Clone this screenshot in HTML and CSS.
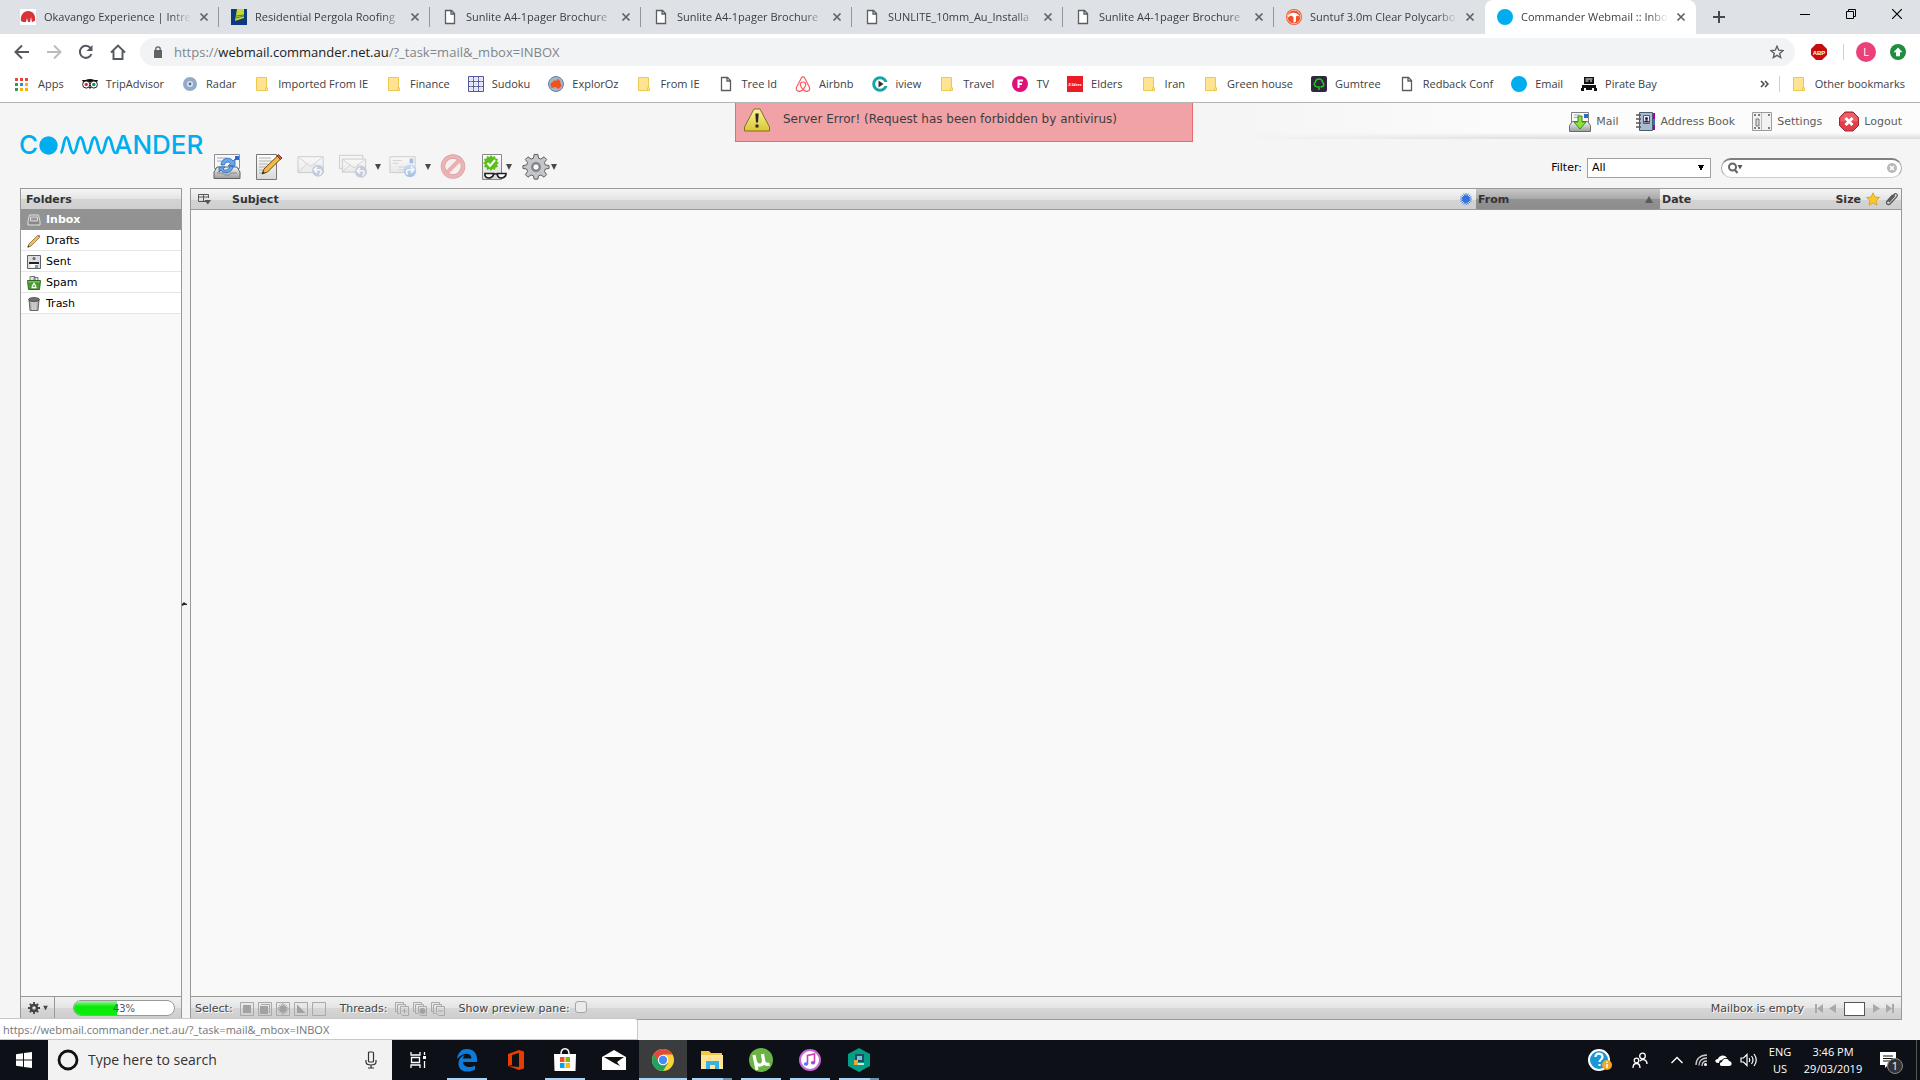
FILE: index.html
```html
<!DOCTYPE html>
<html lang="en">
<head>
<meta charset="utf-8">
<title>Commander Webmail :: Inbox</title>
<link rel="stylesheet" href="styles.css">
</head>
<body>
<svg class="defs" aria-hidden="true">
  <defs>
    <linearGradient id="paper" x1="0" y1="0" x2="0" y2="1"><stop offset="0" stop-color="#fff"/><stop offset="1" stop-color="#d6d8da"/></linearGradient>
    <linearGradient id="steel" x1="0" y1="0" x2="0" y2="1"><stop offset="0" stop-color="#f4f4f4"/><stop offset="1" stop-color="#9a9c9e"/></linearGradient>
    <linearGradient id="blueball" x1="0" y1="0" x2="0" y2="1"><stop offset="0" stop-color="#8db9ee"/><stop offset="1" stop-color="#2f6fd0"/></linearGradient>
    <linearGradient id="yellow" x1="0" y1="0" x2="0" y2="1"><stop offset="0" stop-color="#f8f5a0"/><stop offset="1" stop-color="#dcc532"/></linearGradient>
    <symbol id="file" viewBox="0 0 16 16"><path d="M3.5 1.5h6l3 3v10h-9zM9 1.500v3.500h3.500" fill="#fff" stroke="#5a5d61" stroke-width="1.300"/></symbol>
    <symbol id="folder" viewBox="0 0 16 16"><path d="M2.500 1.500h10v9.500l1 1v2.500h-11z" fill="#fee390" stroke="#edc84f"/><path d="M11.500 14v-2l1-1.500" fill="none" stroke="#edc84f"/></symbol>
    <symbol id="x" viewBox="0 0 10 10"><path d="M1.500 1.500l7 7m0-7l-7 7" fill="none" stroke="#5f6368" stroke-width="1.700"/></symbol>
    <symbol id="down" viewBox="0 0 6 6"><path d="M0 0h6L3 6z" fill="#4a4a4a"/></symbol>
    <symbol id="envelope" viewBox="0 0 30 28"><path d="M1 3h27v17H1z" fill="url(#paper)" stroke="#8b8b8b"/><path d="M1.500 3.500l13 10 13-10M1.500 19.500l9-8.500M27.500 19.500l-9-8.500" fill="none" stroke="#9a9a9a"/></symbol>
  </defs>
</svg>

<header class="browser">
  <nav class="tabs" aria-label="Tabs">
    <div class="tab"><svg class="i16" viewBox="0 0 16 16"><path fill="#fff" d="M0 0h16v16H0z"/><path fill="#d9343c" d="M1 12C0 6 4 2 8 2c5 0 8 4 7 10l-3 1-1-5-1 5H8L7 9l-1 4H3z"/></svg><span class="tab-title">Okavango Experience | Intre</span><button class="close" aria-label="Close tab"><svg viewBox="0 0 10 10"><use href="#x"/></svg></button></div>
    <div class="tab"><svg class="i16" viewBox="0 0 16 16"><path fill="#0c3a7c" d="M0 0h16v16H0z"/><path fill="#c3d82d" d="M6 0h7v9l-9 3z"/><path stroke="#0c3a7c" stroke-width=".6" d="M5 9l8-2M5 7l8-1"/></svg><span class="tab-title">Residential Pergola Roofing</span><button class="close" aria-label="Close tab"><svg viewBox="0 0 10 10"><use href="#x"/></svg></button></div>
    <div class="tab"><svg class="i16"><use href="#file"/></svg><span class="tab-title">Sunlite A4-1pager Brochure</span><button class="close" aria-label="Close tab"><svg viewBox="0 0 10 10"><use href="#x"/></svg></button></div>
    <div class="tab"><svg class="i16"><use href="#file"/></svg><span class="tab-title">Sunlite A4-1pager Brochure</span><button class="close" aria-label="Close tab"><svg viewBox="0 0 10 10"><use href="#x"/></svg></button></div>
    <div class="tab"><svg class="i16"><use href="#file"/></svg><span class="tab-title">SUNLITE_10mm_Au_Installa</span><button class="close" aria-label="Close tab"><svg viewBox="0 0 10 10"><use href="#x"/></svg></button></div>
    <div class="tab"><svg class="i16"><use href="#file"/></svg><span class="tab-title">Sunlite A4-1pager Brochure</span><button class="close" aria-label="Close tab"><svg viewBox="0 0 10 10"><use href="#x"/></svg></button></div>
    <div class="tab last"><svg class="i16" viewBox="0 0 16 16"><circle cx="8" cy="8" r="8" fill="#f0512b"/><path d="M2 6.500c2-4 10-4 12 1.500-2-1.500-3-1.500-4-.5v5l-2.500 1.500V8C5 6 4 6.500 2 8.500z" fill="#fff"/><circle cx="8" cy="8" r="6.800" fill="none" stroke="#fff" stroke-width=".6"/></svg><span class="tab-title">Suntuf 3.0m Clear Polycarbo</span><button class="close" aria-label="Close tab"><svg viewBox="0 0 10 10"><use href="#x"/></svg></button></div>
    <div class="tab active"><svg class="i16" viewBox="0 0 16 16"><circle cx="8" cy="8" r="8" fill="#00aeef"/></svg><span class="tab-title">Commander Webmail :: Inbo</span><button class="close" aria-label="Close tab"><svg viewBox="0 0 10 10"><use href="#x"/></svg></button></div>
    <button class="new-tab" aria-label="New tab"><svg width="12" height="12"><path d="M6 0v12M0 6h12" stroke="#45494d" stroke-width="2"/></svg></button>
    <div class="window-controls">
      <button aria-label="Minimize"><svg width="10" height="10"><path d="M0 5.500h10" stroke="#000"/></svg></button>
      <button aria-label="Restore"><svg width="10" height="10"><path d="M.5 2.500h7v7h-7zM2.500 2.500v-2h7v7h-2" fill="none" stroke="#000"/></svg></button>
      <button aria-label="Close"><svg width="10" height="10"><path d="M0 0l10 10M10 0L0 10" stroke="#000" stroke-width="1.200"/></svg></button>
    </div>
  </nav>

  <div class="address-row">
    <div class="nav-buttons">
      <button aria-label="Back"><svg class="i16" viewBox="0 0 16 16"><path d="M15 8H2M8 1.500L1.500 8 8 14.500" fill="none" stroke="#55595e" stroke-width="2"/></svg></button>
      <button aria-label="Forward"><svg class="i16" viewBox="0 0 16 16"><path d="M1 8h13M8 1.500L14.500 8 8 14.500" fill="none" stroke="#babcbe" stroke-width="2"/></svg></button>
      <button aria-label="Reload"><svg class="i16" viewBox="0 0 16 16"><path d="M13.500 10A6 6 0 1 1 12.500 4" fill="none" stroke="#55595e" stroke-width="2"/><path d="M14.500 1v6h-6z" fill="#55595e"/></svg></button>
      <button aria-label="Home"><svg class="i16" viewBox="0 0 16 16"><path d="M1 8.500L8 1.500l7 7M3.500 7v8h9V7" fill="none" stroke="#55595e" stroke-width="1.900"/></svg></button>
    </div>
    <div class="omnibox">
      <svg width="10" height="12" viewBox="0 0 10 12"><path d="M1 4h8v8H1z" fill="#5f6368"/><path d="M2.800 4.500V3a2.200 2.200 0 0 1 4.400 0v1.500" fill="none" stroke="#5f6368" stroke-width="1.300"/></svg>
      <span class="url">https://<b>webmail.commander.net.au</b>/?_task=mail&amp;_mbox=INBOX</span>
      <button aria-label="Bookmark this page"><svg width="14" height="14" viewBox="0 0 14 14"><path d="M7 1.200l1.700 4 4.300.4-3.300 2.800 1 4.200L7 10.400l-3.700 2.200 1-4.200L1 5.600l4.300-.4z" fill="none" stroke="#5f6368" stroke-width="1.400"/></svg></button>
    </div>
    <button class="ext" aria-label="Adblock Plus"><svg class="i16" viewBox="0 0 16 16"><path d="M5 0h6l5 5v6l-5 5H5l-5-5V5z" fill="#c70d0d"/><text x="8" y="11" class="abp">ABP</text></svg></button>
    <span class="bar-sep"></span>
    <button class="avatar">L</button>
    <button class="ext" aria-label="Update"><svg class="i16" viewBox="0 0 16 16"><circle cx="8" cy="8" r="8" fill="#1e8e3e"/><path d="M8 3.500l4.500 4.700H10v4H6v-4H3.500z" fill="#fff"/></svg></button>
  </div>

  <nav class="bookmarks" aria-label="Bookmarks">
    <a href="#"><svg class="i16" viewBox="0 0 16 16"><path fill="#e8453c" d="M1 2h3v3H1zM6 2h3v3H6zM11 2h3v3h-3z"/><path fill="#2d9b57" d="M1 7h3v3H1zM1 12h3v3H1z"/><path fill="#3b82f0" d="M6 7h3v3H6z"/><path fill="#f5b400" d="M11 7h3v3h-3zM6 12h3v3H6zM11 12h3v3h-3z"/></svg>Apps</a>
    <a href="#"><svg class="i16" viewBox="0 0 16 16"><path d="M0 4h3.500c3-1.500 6-1.500 9 0H16l-1 2H1z" fill="#111"/><circle cx="4.200" cy="8.500" r="3.600" fill="#fff" stroke="#222"/><circle cx="11.800" cy="8.500" r="3.600" fill="#fff" stroke="#222"/><circle cx="4.200" cy="8.500" r="1.700" fill="#d33"/><circle cx="11.800" cy="8.500" r="1.700" fill="#285"/><path d="M7 11h2l-1 2.500z"/></svg>TripAdvisor</a>
    <a href="#"><svg class="i16" viewBox="0 0 16 16"><circle cx="8" cy="8" r="7" fill="#92abc8"/><circle cx="8" cy="8" r="3" fill="#dde3ea"/><circle cx="8" cy="8" r="1.400" fill="#54708e"/></svg>Radar</a>
    <a href="#"><svg class="i16"><use href="#folder"/></svg>Imported From IE</a>
    <a href="#"><svg class="i16"><use href="#folder"/></svg>Finance</a>
    <a href="#"><svg class="i16" viewBox="0 0 16 16"><path d="M.5.500h15v15H.5zM5.500 0v16M10.500 0v16M0 5.500h16M0 10.500h16" fill="#f4f4ff" stroke="#55559a"/><path d="M3 1v14M8 1v14M13 1v14M1 3h14M1 8h14M1 13h14" stroke="#d0d0e8" stroke-width=".6"/></svg>Sudoku</a>
    <a href="#"><svg class="i16" viewBox="0 0 16 16"><circle cx="8" cy="8" r="7.500" fill="#9eb6cc" stroke="#68819b"/><path d="M2.500 9c0-3 3-3 4-5l2 1 1-2 2 1 1 3 1 3-3 3-3-2-4 1z" fill="#f4511e"/></svg>ExplorOz</a>
    <a href="#"><svg class="i16"><use href="#folder"/></svg>From IE</a>
    <a href="#"><svg class="i16"><use href="#file"/></svg>Tree Id</a>
    <a href="#"><svg class="i16" viewBox="0 0 16 16"><path d="M8 13.500C6 11 5.300 9.800 5.300 8.700a2.700 2.700 0 0 1 5.400 0c0 1.100-.7 2.300-2.700 4.800-2 2-4 2.300-5.500 1.300-1.500-1-1.300-2.600-.8-3.800L6.300 2c.8-1.400 2.600-1.400 3.400 0l4.600 9c.5 1.200.7 2.800-.8 3.800-1.500 1-3.500.7-5.500-1.300z" fill="none" stroke="#ff5a5f" stroke-width="1.200"/></svg>Airbnb</a>
    <a href="#"><svg class="i16" viewBox="0 0 16 16"><circle cx="8" cy="8" r="6.300" fill="none" stroke="#16a5a5" stroke-width="3"/><path d="M11 6h5v4h-5z" fill="#fff"/><path d="M6.500 4.500l5 3.500-5 3.500z" fill="#333"/></svg>iview</a>
    <a href="#"><svg class="i16"><use href="#folder"/></svg>Travel</a>
    <a href="#"><svg class="i16" viewBox="0 0 16 16"><circle cx="8" cy="8" r="8" fill="#e20f7b"/><path d="M6.500 12V4.500H11M6.500 8H10" stroke="#fff" stroke-width="2" fill="none"/></svg>TV</a>
    <a href="#"><svg class="i16" viewBox="0 0 16 16"><path d="M0 0h16v16H0z" fill="#ed1c24"/><text x="8" y="10" class="elders">Elders</text></svg>Elders</a>
    <a href="#"><svg class="i16"><use href="#folder"/></svg>Iran</a>
    <a href="#"><svg class="i16"><use href="#folder"/></svg>Green house</a>
    <a href="#"><svg class="i16" viewBox="0 0 16 16"><rect width="16" height="16" rx="2" fill="#32253c"/><path d="M8 14v-3c-6 0-5-4-3.500-5C5 2 11 2 11.500 6c1.500 1 2.500 5-2 5" fill="none" stroke="#14d314" stroke-width="1.500"/></svg>Gumtree</a>
    <a href="#"><svg class="i16"><use href="#file"/></svg>Redback Conf</a>
    <a href="#"><svg class="i16" viewBox="0 0 16 16"><circle cx="8" cy="8" r="8" fill="#00aeef"/></svg>Email</a>
    <a href="#"><svg class="i16" viewBox="0 0 16 16"><path d="M3 1h10v7H3zM1 9h14v3H1zM0 12h3v3H0zM13 12h3v3h-3zM5 12h6v2H5z" fill="#111"/><path d="M4.500 3h7M4.500 5h3M9 5h2" stroke="#fff"/></svg>Pirate Bay</a>
    <button class="more" aria-label="More bookmarks"><svg width="9" height="8" viewBox="0 0 9 8"><path d="M1 1l3 3-3 3M5 1l3 3-3 3" fill="none" stroke="#45494d" stroke-width="1.500"/></svg></button>
    <span class="bar-sep"></span>
    <a href="#"><svg class="i16"><use href="#folder"/></svg>Other bookmarks</a>
  </nav>
</header>

<main class="webmail">
  <div class="error" role="alert">
    <svg width="28" height="26" viewBox="0 0 28 26"><path d="M11 2h6l9.500 18v4h-25v-4z" fill="url(#yellow)" stroke="#7d7220" stroke-linejoin="round"/><path d="M12.300 6.500h3.400l-.7 9h-2zM12.500 17.500h3v3h-3z" fill="#2a2a1a"/></svg>
    <span>Server Error! (Request has been forbidden by antivirus)</span>
  </div>

  <div class="mail-head">
    <svg class="logo" width="189" height="20" viewBox="0 0 189 20" role="img" aria-label="Commander">
      <text x="-1" y="18">C</text><circle cx="28.500" cy="9.500" r="9.200" fill="#00aeef"/>
      <path d="M40.500 17c3-1 3-15.500 6-15.500S50 17 53.500 17s3.500-15.500 7-15.500S64 17 67.500 17s3.500-15.500 7-15.500S78 17 81.500 17s3.500-15.500 7-15.500S92 17 95.500 17" fill="none" stroke="#00aeef" stroke-width="2.800"/>
      <text x="94" y="18">ANDER</text>
    </svg>
    <nav class="tasks">
      <a href="#"><svg width="22" height="22" viewBox="0 0 22 22"><path d="M2.500 1.500h17v10h-17z" fill="#f7f9fc" stroke="#7e7e7e"/><path d="M5 4h6M5 6.500h5" stroke="#a0a8b4"/><path d="M15 3h4v4h-4z" fill="#2e68d4"/><path d="M.5 20.500v-6l3-4h15l3 4v6z" fill="url(#steel)" stroke="#6b6b6b"/><path d="M9 5h4v6h4l-6 7-6-7h4z" fill="#8ce23c" stroke="#3c8a12"/></svg>Mail</a>
      <a href="#"><svg width="20" height="22" viewBox="0 0 20 22"><path d="M15 2h4v17h-4z" fill="#a0a"/><path d="M15 8h4v6h-4z" fill="#37a"/><path d="M3.500 1.500h13v18h-13z" fill="#a9bbd0" stroke="#4b5c6e"/><path d="M7.500 4.500h6v8h-6z" fill="#eef" stroke="#556"/><circle cx="10.500" cy="7.500" r="1.500" fill="#223"/><path d="M8 11.500c0-3 5-3 5 0z" fill="#223"/><path d="M0 4h5M0 8h5M0 12h5M0 16h5" stroke="#555" stroke-width="1.500"/></svg>Address Book</a>
      <a href="#"><svg width="20" height="22" viewBox="0 0 20 22"><path d="M.5 1.500h19v18H.5z" fill="#f2f2f2" stroke="#9b9b9b"/><path d="M9.500 2v17" stroke="#bbb"/><path d="M4 8h3v7H4z" fill="#ddd" stroke="#777"/><path d="M2 4h2M6 4h2M16 4h2M2 17h2M6 17h2M16 17h2" stroke="#555" stroke-width="1.500"/></svg>Settings</a>
      <a href="#"><svg width="20" height="22" viewBox="0 0 20 22"><path d="M6 1h8l5.500 5.500v8L14 20H6L.5 14.500v-8z" fill="#de3f4b" stroke="#a32630"/><path d="M6 2h8l4.500 4.500v4h-17v-4z" fill="#f4808a" opacity=".5"/><path d="M6.500 7l7 7m0-7l-7 7" stroke="#fff" stroke-width="3"/></svg>Logout</a>
    </nav>
    <div class="toolbar">
      <button aria-label="Check for new messages"><svg width="28" height="28" viewBox="0 0 28 28"><path d="M1.500 1.500h25v14h-25z" fill="#f5f8fc" stroke="#909090"/><path d="M4 5h10M4 8h6" stroke="#aab"/><path d="M22 3h4v4h-4z" fill="#2e68d4"/><path d="M1 25.500V19l3-5h20l3 5v6.500z" fill="url(#steel)" stroke="#606060"/><path d="M4 20h6l1.500 2h5L18 20h6" fill="none" stroke="#888"/><path d="M8 12c0-7 9-9 12-4l2-2v7h-7l2.500-2.500c-2-2.500-6-1-6 1.500zM20 13c0 7-9 9-12 4l-2 2v-5h6l-2 2c2 2.500 6 1 7-3z" fill="#6aa5ea" stroke="#2f66b8" stroke-width=".8"/></svg></button>
      <button aria-label="Compose"><svg width="28" height="28" viewBox="0 0 28 28"><path d="M1.500 1.500h20v25h-20z" fill="url(#paper)" stroke="#777"/><path d="M4 5h12M4 8h13M4 11h9M4 14h8M4 17h7M4 20h4" stroke="#b0b0b0"/><path d="M7 21l2-5L22.500 3l3 3-13 13z" fill="#f3bb45" stroke="#6b4a14"/><path d="M22 3l1.500-1.500 3.500 3.500L25.500 6.500z" fill="#cf5a5a" stroke="#7a3030"/><path d="M7 21l1-3 2 2z" fill="#333"/></svg></button>
      <button disabled aria-label="Reply"><svg width="28" height="28" viewBox="0 0 30 28"><use href="#envelope" width="30" height="28"/><circle cx="22.500" cy="18" r="6.500" fill="#7e93b8"/><path d="M19 17h5c3 0 2 4 0 5M21.500 14L18.500 17l3 3" fill="none" stroke="#fff" stroke-width="1.700"/></svg></button>
      <button disabled aria-label="Reply to all"><svg width="28" height="28" viewBox="0 0 30 28"><path d="M.5 1.500h25v14H.5z" fill="#f6f6f6" stroke="#8b8b8b"/><path d="M3.500 5.500h25v14h-25z" fill="url(#paper)" stroke="#8b8b8b"/><path d="M4 6l12 9 12-9M4 19l8-7M28 19l-8-7" fill="none" stroke="#9a9a9a"/><circle cx="23.500" cy="19" r="6.500" fill="#7e93b8"/><path d="M20 18h5c3 0 2 4 0 5M22.500 15L19.500 18l3 3" fill="none" stroke="#fff" stroke-width="1.700"/></svg></button>
      <button class="drop" aria-label="Reply options"><svg width="6" height="6"><use href="#down"/></svg></button>
      <button disabled aria-label="Forward"><svg width="28" height="28" viewBox="0 0 30 28"><path d="M1 3h27v17H1z" fill="url(#paper)" stroke="#8b8b8b"/><path d="M4 7h10M4 10h6M10 14h8M10 17h6" stroke="#9a9aa8"/><path d="M22 5h4v5h-4z" fill="#2e68d4"/><circle cx="22.500" cy="18" r="6.800" fill="url(#blueball)"/><path d="M26 17h-4c-4 0-4 3-2 5M23.500 13.500l3 3.500-3 3" fill="none" stroke="#fff" stroke-width="1.700"/></svg></button>
      <button class="drop" aria-label="Forward options"><svg width="6" height="6"><use href="#down"/></svg></button>
      <button disabled aria-label="Delete"><svg width="28" height="28" viewBox="0 0 28 28"><circle cx="14" cy="13.500" r="10" fill="#fbeaea" stroke="#a61c1c" stroke-width="4.500"/><circle cx="14" cy="13.500" r="10" fill="none" stroke="#e05555" stroke-width="3.200"/><path d="M7 20.500l14-14" stroke="#d64a4a" stroke-width="4"/></svg></button>
      <button aria-label="Mark messages"><svg width="28" height="28" viewBox="0 0 28 28"><path d="M1.500 1.500h19v25h-19z" fill="url(#paper)" stroke="#888"/><path d="M10 2l1.500 2 2.500-1 .5 2.500 2.500.5-1 2.500 2 1.500-2 1.500 1 2.500-2.500.5-.5 2.500-2.500-1L10 18l-1.500-2-2.500 1-.5-2.500-2.500-.5 1-2.500-2-1.500 2-1.500-1-2.500 2.500-.5L6 3l2.500 1z" fill="#5abf1a"/><path d="M6.500 10l2.500 3 5-6" fill="none" stroke="#fff" stroke-width="2"/><path d="M4 20.500h8.500c0 5-7 6-8.500 2zM16.500 20.500H25c0 5-7 6-8.500 2z" fill="#fff" stroke="#222" stroke-width="1.700"/><path d="M12.500 21.500q2-1.500 4 0" fill="none" stroke="#222" stroke-width="1.500"/></svg></button>
      <button class="drop near" aria-label="Mark options"><svg width="6" height="6"><use href="#down"/></svg></button>
      <button aria-label="More actions"><svg width="28" height="28" viewBox="-1 0 30 29"><path d="M12 1h4l.7 4 2.600 1 3.300-2.400 2.800 2.800L23 9.700l1 2.600 4 .7v3l-4 .7-1 2.600 2.400 3.300-2.800 2.800-3.300-2.400-2.600 1-.7 3.500h-4l-.7-3.500-2.600-1-3.300 2.400-2.800-2.800L5 19.300l-1-2.600-4-.7v-3l4-.7 1-2.600-2.400-3.300 2.800-2.800L8.700 6l2.600-1z" fill="#c4c6ca" stroke="#555"/><circle cx="14" cy="14.500" r="5.500" fill="#8c8f94"/><circle cx="14" cy="14.500" r="3.500" fill="#f6f6f6" stroke="#666"/></svg></button>
      <button class="drop close-by" aria-label="More options"><svg width="6" height="6"><use href="#down"/></svg></button>
    </div>
    <form class="filters">
      <label for="filter">Filter:</label>
      <select id="filter"><option>All</option></select>
      <div class="search">
        <svg width="16" height="12" viewBox="0 0 16 12"><circle cx="4.500" cy="5" r="3.500" fill="none" stroke="#666" stroke-width="2"/><path d="M7 8l2.500 3" stroke="#666" stroke-width="2"/><path d="M9.500 3h5L12 7.500z" fill="#555"/></svg>
        <input type="text" aria-label="Search">
        <svg width="10" height="10" viewBox="0 0 10 10"><circle cx="5" cy="5" r="5" fill="#b8b8b8"/><path d="M3 3l4 4m0-4L3 7" stroke="#fff" stroke-width="1.500"/></svg>
      </div>
    </form>
  </div>

  <div class="panes">
    <section class="pane folders">
      <h2 class="bar-head">Folders</h2>
      <ul>
        <li><a href="#" class="selected"><svg width="14" height="14" viewBox="0 0 14 14"><path d="M2.500 2h9L13 8.500V12H1V8.500z" fill="#888" stroke="#e4e4e4"/><path d="M3.500 4h7v4h-7z" fill="#999" stroke="#ddd"/></svg>Inbox</a></li>
        <li><a href="#"><svg width="14" height="14" viewBox="0 0 14 14"><path d="M1 13l1-3 8.500-8.500 2 2L4 12z" fill="#f0c060" stroke="#8a6a30" stroke-width=".8"/><path d="M10.500 1.500l2 2 .8-1.500L12 .7z" fill="#c66"/><path d="M.5 13.500l.6-2 1.500 1.500z" fill="#222"/></svg>Drafts</a></li>
        <li><a href="#"><svg width="14" height="14" viewBox="0 0 14 14"><path d="M.5.500h13v13H.5z" fill="#dcdfe2" stroke="#5e6266"/><circle cx="7" cy="3.500" r="1.500" fill="#666"/><path d="M2 7h10v2H2z" fill="#222"/><path d="M3.500 9h7v3.500h-7z" fill="#fff"/><path d="M8 10h3v3H8z" fill="#6a98e0"/></svg>Sent</a></li>
        <li><a href="#"><svg width="14" height="14" viewBox="0 0 14 14"><path d="M3 .5h5v5H3zM7 1.500h4v4H7z" fill="#dfe6f2" stroke="#777"/><path d="M.5 4.500h13l-1 9h-11z" fill="#4c9a35" stroke="#2f6e1f"/><path d="M1 5h12v1.500H1z" fill="#78bb5d"/><path d="M5 10.500L7 7.500l2 3M4.500 11.500h5" fill="none" stroke="#fff" stroke-width="1.300"/></svg>Spam</a></li>
        <li><a href="#"><svg width="14" height="14" viewBox="0 0 14 14"><path d="M2 3h10l-1 10.500H3z" fill="#aaa" stroke="#666"/><ellipse cx="7" cy="2.500" rx="5.500" ry="1.800" fill="#777" stroke="#444"/><path d="M5 5l.3 8M7 5v8M9 5l-.3 8" stroke="#e0e0e0"/></svg>Trash</a></li>
      </ul>
      <footer class="bar-foot">
        <button class="gear" aria-label="Folder actions"><svg width="12" height="12" viewBox="0 0 12 12"><circle cx="6" cy="6" r="3" fill="none" stroke="#444" stroke-width="2.500"/><path d="M6 0v2.500M6 9.500V12M0 6h2.500M9.500 6H12M1.800 1.800l1.700 1.700M8.500 8.500l1.700 1.700M1.800 10.200l1.700-1.700M8.500 3.500l1.700-1.700" stroke="#444" stroke-width="1.800"/></svg><svg width="5" height="6" viewBox="0 0 6 6"><use href="#down"/></svg></button>
        <div class="quota"><span class="quota-fill" style="width:43%"></span><span class="quota-text">43%</span></div>
      </footer>
    </section>

    <div class="splitter"><svg width="5" height="4" viewBox="0 0 5 4"><path d="M0 4V2l2-2 1 1 2 1v1H2z" fill="#222"/></svg></div>

    <section class="pane messages">
      <table>
        <thead>
          <tr>
            <th class="c-opt"><svg width="13" height="11" viewBox="0 0 13 11"><path d="M8 7.500H.5v-7h10V4M.5 3h10M5.500.500v7" fill="none" stroke="#555"/><path d="M6.500 6h6.500l-3.200 4.500z" fill="#555"/></svg></th>
            <th>Subject</th>
            <th class="c-icon"><svg width="12" height="12" viewBox="0 0 12 12"><circle cx="6" cy="6" r="3.800" fill="#2f74e0"/><path d="M6 0v12M0 6h12M1.800 1.800l8.400 8.400M10.200 1.800l-8.400 8.400M3.700.500l4.600 11M8.300.500L3.700 11.500M.5 3.700l11 4.600M.5 8.300l11-4.600" stroke="#2f74e0" stroke-width=".9"/></svg></th>
            <th class="c-from"><span class="sorted">From<svg width="8" height="7" viewBox="0 0 8 7"><path d="M4 0l4 7H0z" fill="#5a5a5a"/></svg></span></th>
            <th class="c-date">Date</th>
            <th class="c-size">Size</th>
            <th class="c-flag"><svg width="14" height="14" viewBox="0 0 14 14"><path d="M7 .8l1.900 4.200 4.600.5-3.400 3.100.9 4.600L7 10.900 3 13.200l.9-4.600L.5 5.500 5.100 5z" fill="#fbc92c" stroke="#d79a1e" stroke-width=".8"/></svg></th>
            <th class="c-flag"><svg width="14" height="14" viewBox="0 0 14 14"><path d="M4 10l6-6.500M2.500 9.500L9 2.500c2-2 4.500.3 2.700 2.300L5.500 11.500c-2.500 2.500-5.500-.2-3.300-2.600L7.500 3" fill="none" stroke="#555" stroke-width="1.200"/></svg></th>
          </tr>
        </thead>
      </table>
      <footer class="bar-foot list-foot">
        <span>Select:</span>
        <span class="set">
          <button aria-label="All"><svg class="i14" viewBox="0 0 14 14"><path class="bx" d="M.5.500h13v13H.5z"/><path class="fl" d="M3 3h8v8H3z"/></svg></button>
          <button aria-label="Current page"><svg class="i14" viewBox="0 0 14 14"><path class="bx" d="M.5.500h13v13H.5zM3 2.500h8.500V11"/><path class="fl" d="M2 4h8v8H2z"/></svg></button>
          <button aria-label="Unread"><svg class="i14" viewBox="0 0 14 14"><path class="bx" d="M.5.500h13v13H.5zM7 1v12M1 7h12M3 3l8 8M11 3l-8 8M5 2l4 10M9 2L5 12M2 5l10 4M2 9l10-4"/><circle class="fl" cx="7" cy="7" r="3.500"/></svg></button>
          <button aria-label="Invert"><svg class="i14" viewBox="0 0 14 14"><path class="bx" d="M.5.500h13v13H.5z"/><path class="fl" d="M3 2.500v8.500h8.500z"/></svg></button>
          <button aria-label="None"><svg class="i14" viewBox="0 0 14 14"><path class="bx" d="M.5.500h13v13H.5z"/></svg></button>
        </span>
        <span>Threads:</span>
        <span class="set">
          <button aria-label="Expand all"><svg class="i14" viewBox="0 0 14 14"><path class="bx" d="M2.500 9.500h-2v-9h8v2M4.500 11.500h-2v-9h8v2M5.500 4.500h8v9h-6l-2-2zM9.500 6.500v5M7 9h5"/></svg></button>
          <button aria-label="Expand unread"><svg class="i14" viewBox="0 0 14 14"><path class="bx" d="M2.500 9.500h-2v-9h8v2M4.500 11.500h-2v-9h8v2M5.500 4.500h8v9h-6l-2-2z"/><circle class="fl" cx="9.500" cy="9" r="3"/></svg></button>
          <button aria-label="Collapse all"><svg class="i14" viewBox="0 0 14 14"><path class="bx" d="M2.500 9.500h-2v-9h8v2M4.500 11.500h-2v-9h8v2M5.500 4.500h8v9h-6l-2-2zM7 9h5"/></svg></button>
        </span>
        <label for="pane">Show preview pane:</label><input type="checkbox" id="pane">
        <span class="count">Mailbox is empty</span>
        <button aria-label="First page"><svg width="8" height="9"><path class="pg" d="M0 0h2v9H0zM8 0v9L2 4.500z"/></svg></button>
        <button aria-label="Previous page"><svg width="7" height="9"><path class="pg" d="M7 0v9L0 4.500z"/></svg></button>
        <input class="page" type="text" aria-label="Page">
        <button aria-label="Next page"><svg width="7" height="9"><path class="pg" d="M0 0v9l7-4.500z"/></svg></button>
        <button aria-label="Last page"><svg width="8" height="9"><path class="pg" d="M6 0h2v9H6zM0 0v9l6-4.500z"/></svg></button>
      </footer>
    </section>
  </div>
  <div class="status-bubble">https://webmail.commander.net.au/?_task=mail&amp;_mbox=INBOX</div>
</main>

<footer class="taskbar">
  <button class="start" aria-label="Start"><svg width="16" height="16" viewBox="0 0 16 16"><path d="M0 2.200L7 1.200v6.300H0zM8 1l8-1v7.500H8zM0 8.500h7v6.300l-7-1zM8 8.500h8V16l-8-1z" fill="#fff"/></svg></button>
  <label class="win-search"><svg width="22" height="22" viewBox="0 0 22 22"><circle cx="11" cy="11" r="9" fill="none" stroke="#111" stroke-width="2.800"/></svg><input type="text" placeholder="Type here to search"><svg width="12" height="18" viewBox="0 0 12 18"><rect x="3.500" y="1" width="5" height="10" rx="1" fill="none" stroke="#333" stroke-width="1.200"/><path d="M1 9v2c0 4 10 4 10 0V9M6 14v3M3 17h6" fill="none" stroke="#333" stroke-width="1.200"/></svg></label>
  <div class="apps">
    <button aria-label="Task view"><svg width="18" height="18" viewBox="0 0 18 18"><path d="M2 1v3h9V1M2 17v-3h9v3M2.500 6.500h8v5h-8zM15.500 1v3M15.500 10v7" fill="none" stroke="#fff" stroke-width="1.300"/><path d="M14 5h3v3h-3z" fill="#fff"/></svg></button>
    <button class="open" aria-label="Edge"><svg width="22" height="24" viewBox="0 0 22 24"><path d="M1 11C2 4 6 1 11 1c6 0 10 4 10 10v3H7c0 5 7 6.500 12 3.500v4C11 26 2 23 2.500 15 3 10 6 8 9 7 8 8 7.200 9 7 10.500h8.500C15.500 4 7 4 1 11z" fill="#0c7cdc"/></svg></button>
    <button aria-label="Office"><svg width="18" height="22" viewBox="0 0 18 22"><path d="M1 5l11-4 5 1.500v17L12 21 1 17l11 1V4L5 6v10l-4 1z" fill="#eb3c00"/></svg></button>
    <button class="open" aria-label="Store"><svg width="24" height="24" viewBox="0 0 24 24"><path d="M1 6h22l-.5 17h-21z" fill="#fff"/><path d="M8 6c0-7 8-7 8 0" fill="none" stroke="#fff" stroke-width="1.500"/><path d="M7 9h4.500v5H7z" fill="#f25022"/><path d="M12.500 9H17v5h-4.500z" fill="#7fba00"/><path d="M7 15h4.500v5H7z" fill="#00a4ef"/><path d="M12.500 15H17v5h-4.500z" fill="#ffb900"/></svg></button>
    <button aria-label="Mail"><svg width="24" height="20" viewBox="0 0 24 20"><path d="M0 7l12-7 12 7v13H0z" fill="#fff"/><path d="M2 7h20l-7 5 3 4-6-3z" fill="#111"/></svg></button>
    <button class="open current" aria-label="Chrome"><svg width="22" height="22" viewBox="0 0 22 22"><circle cx="11" cy="11" r="11" fill="#fdd13a"/><path d="M1.500 5.500A11 11 0 0 1 20.500 5.500H11L6 13z" fill="#dd4b3e"/><path d="M1.500 5.500A11 11 0 0 0 11 22l5-8-9-.5z" fill="#1da462"/><circle cx="11" cy="11" r="5.200" fill="#fff"/><circle cx="11" cy="11" r="4.200" fill="#4a8af4"/></svg></button>
    <button class="open multi" aria-label="File Explorer"><svg width="22" height="20" viewBox="0 0 22 20"><path d="M0 1h8l2 2h11v15H0z" fill="#f2c744"/><path d="M0 5h22v14H0z" fill="#ffe694"/><path d="M5 19v-8h13v8h-4v-4H9v4z" fill="#35b1e6"/></svg></button>
    <button class="open" aria-label="uTorrent"><svg width="24" height="24" viewBox="0 0 24 24"><circle cx="12" cy="12" r="12" fill="#6ab344"/><path d="M8 22L5 7M7 15c3 4 8 2 7.500-3L13.500 6M14.500 13c1 3 3 4 6 3" fill="none" stroke="#fff" stroke-width="3.200"/></svg></button>
    <button class="open" aria-label="iTunes"><svg width="22" height="22" viewBox="0 0 22 22"><circle cx="11" cy="11" r="10" fill="#fff" stroke="#c865d8" stroke-width="2"/><path d="M8.500 15V6.500l7-1.500v8.500" fill="none" stroke="#d23ea8" stroke-width="1.600"/><ellipse cx="7" cy="15" rx="2.200" ry="1.700" fill="#4f7df0"/><ellipse cx="14" cy="13.800" rx="2.200" ry="1.700" fill="#a04fe0"/></svg></button>
    <button class="open multi" aria-label="Security"><svg width="22" height="24" viewBox="0 0 22 24"><path d="M11 0l11 6v12l-11 6-11-6V6z" fill="#009f86"/><path d="M7 6h9v8H7z" fill="#274a5c"/><path d="M9 8h5v4H9z" fill="#6cc6e6"/><path d="M6 12h4v5H6z" fill="#f2a53a"/><path d="M10 15h6v2h-6z" fill="#ddd"/></svg></button>
  </div>
  <div class="tray">
    <svg width="24" height="22" viewBox="0 0 24 22"><circle cx="11" cy="11" r="10" fill="#1897d8" stroke="#fff" stroke-width="2"/><path d="M7.500 8c0-5 7-4 7 0 0 2.500-3 2.500-3 5M11.500 15v2" fill="none" stroke="#fff" stroke-width="2.200"/><circle cx="19" cy="16" r="5" fill="#f5a623"/><path d="M19 15v4M19 12.500V14" stroke="#fff" stroke-width="1.500"/></svg>
    <svg class="people" width="16" height="16" viewBox="0 0 16 16"><circle cx="10.500" cy="4" r="2.800" fill="none" stroke="#fff" stroke-width="1.300"/><circle cx="4.500" cy="8.500" r="2.300" fill="none" stroke="#fff" stroke-width="1.300"/><path d="M1 16c0-6 7-6 7 0M8 9c3-3 7-1 7 3" fill="none" stroke="#fff" stroke-width="1.300"/></svg>
    <svg width="12" height="8" viewBox="0 0 12 8"><path d="M.5 7L6 1.500 11.500 7" fill="none" stroke="#fff" stroke-width="1.400"/></svg>
    <svg class="wifi" width="12" height="12" viewBox="0 0 12 12"><path d="M1 11C1 5 5 1 12 1M4 11.500C4 7 7 4 12 4M7 12c0-3 2-5 5-5" fill="none" stroke="#ccc" stroke-width="1.300"/><circle cx="10.500" cy="10.500" r="1.500" fill="#fff"/></svg>
    <svg width="17" height="11" viewBox="0 0 17 11"><path d="M3 8C-1 8 0 3.500 3 4c1-4 7-5 9-1-4-.5-5 2-5 2-2 0-3 1-3 3z" fill="#fff"/><path d="M7 11c-3 0-2.500-4 0-4 1-4 6-4 7-1 3 0 4 5 0 5z" fill="#fff"/></svg>
    <svg width="17" height="14" viewBox="0 0 17 14"><path d="M1 5h2.500L7 1.500v11L3.500 9H1zM9 5q1.500 2 0 4M11.500 3q3 4 0 8M14 1q4.500 6 0 12" fill="none" stroke="#fff" stroke-width="1.200"/></svg>
    <span class="lang">ENG<br>US</span>
    <span class="clock">3:46 PM<br>29/03/2019</span>
    <span class="notify"><svg width="16" height="16" viewBox="0 0 16 16"><path d="M0 0h16v13H8l-3 3v-3H0z" fill="#fff"/><path d="M3 4h10M3 6.500h10M3 9h7" stroke="#111"/></svg><b>1</b></span>
  </div>
</footer>
</body>
</html>
```
FILE: styles.css
```css
* { box-sizing: border-box; }
html, body { height: 100%; margin: 0; }
body { display: flex; flex-direction: column; background: #f5f5f5; font: 11px/16px "Open Sans", sans-serif; color: #3c4043; overflow: hidden; }
button { display: flex; align-items: center; justify-content: center; padding: 0; border: 0; background: none; font: inherit; color: inherit; }
a { color: inherit; text-decoration: none; }
svg { display: block; flex: none; }
input { font: inherit; }
.defs { position: absolute; width: 0; height: 0; }
.i16 { width: 16px; height: 16px; }
.i14 { width: 14px; height: 14px; }

/* Browser frame */
.browser { flex: none; background: #fff; border-bottom: 1px solid #b3b3b3; }
.tabs { display: flex; height: 34px; padding-left: 8px; background: #dee1e6; }
.tab { position: relative; display: flex; align-items: center; flex: 0 1 211px; min-width: 0; gap: 8px; padding: 0 10px 0 12px; }
.tab:not(.last):not(.active)::after { content: ""; position: absolute; right: 0; top: 7px; width: 1px; height: 20px; background: #92959a; }
.tab.active { background: #fff; border-radius: 8px 8px 0 0; }
.tab-title { flex: 1; min-width: 0; overflow: hidden; white-space: nowrap; -webkit-mask-image: linear-gradient(90deg, #000 calc(100% - 20px), transparent); mask-image: linear-gradient(90deg, #000 calc(100% - 20px), transparent); }
.close, .close svg { width: 10px; height: 10px; }
.new-tab { width: 46px; }
.window-controls { display: flex; margin-left: auto; height: 28px; }
.window-controls button { width: 46px; }

.address-row { display: flex; align-items: center; height: 36px; padding: 0 14px 0 6px; }
.nav-buttons { display: flex; width: 134px; }
.nav-buttons button { width: 32px; height: 32px; }
.omnibox { display: flex; align-items: center; flex: 1; height: 28px; margin-right: 16px; padding: 0 11px 0 13px; border-radius: 14px; background: #f1f3f4; }
.url { flex: 1; margin-left: 11px; font-size: 13px; color: #80868b; }
.url b { font-weight: 400; color: #202124; }
.abp { font: bold 6px "Liberation Sans", sans-serif; fill: #fff; text-anchor: middle; }
.elders { font: italic bold 5px "Liberation Serif", serif; fill: #fff; text-anchor: middle; }
.bar-sep { width: 1px; height: 16px; margin: 0 12px 0 16px; background: #cdcfd2; }
.avatar { width: 20px; height: 20px; margin-right: 14px; border-radius: 50%; background: #ec407a; color: #fff; }

.bookmarks { display: flex; align-items: center; gap: 18px; height: 32px; padding: 0 15px 4px 14px; white-space: nowrap; }
.bookmarks a { display: flex; align-items: center; gap: 8px; }
.more { margin-left: auto; }
.bookmarks .bar-sep { margin: 0 -7px 0 -8px; }

/* Webmail */
.webmail { position: relative; flex: 1; min-height: 0; display: flex; flex-direction: column; padding: 0 18px 20px 20px; font: 11px/16px "DejaVu Sans", sans-serif; color: #333; }
.error { position: absolute; z-index: 1; top: 0; left: 50%; display: flex; gap: 12px; width: 458px; height: 39px; margin-left: -225px; padding: 4px 0 0 7px; border: 1px solid #e46c6c; border-top: 0; background: #f0a2a7; color: #3d3d3d; font-size: 12px; }
.error span { padding-top: 4px; white-space: nowrap; }
.mail-head { display: grid; grid-template-columns: 193px 1fr auto; grid-template-rows: 36px 49px; flex: none; }
.logo { grid-row: 1 / 3; margin-top: 33px; overflow: visible; }
.logo text { font: 500 26px Inter, sans-serif; fill: #00aeef; }
.tasks { grid-column: 2 / 4; display: flex; justify-content: flex-end; align-items: center; gap: 17px; margin-right: -18px; padding: 2px 18px 0 0; background: linear-gradient(90deg, #f5f5f5 60%, #f5f5f500 78%), linear-gradient(#fcfcfc 82%, #dcdcdc); color: #5c5c5c; }
.tasks a { display: flex; align-items: center; gap: 5px; }
.toolbar { grid-column: 2; display: flex; align-items: center; gap: 14px; padding-top: 6px; }
.toolbar button:disabled { opacity: .4; }
.drop { margin: 0 -6px; }
.drop.near { margin: 0 -4px 0 -17px; }
.drop.close-by { margin-left: -13px; }
.filters { display: flex; align-items: center; gap: 5px; padding-top: 8px; margin: 0; color: #000; }
.filters select { appearance: none; width: 124px; height: 20px; padding: 0 16px 1px 4px; border: 1px solid #a0a0a0; border-radius: 0; background: linear-gradient(to bottom left, #000 50%, transparent 52%) no-repeat right 9px top 6px / 3px 6px, linear-gradient(to bottom right, #000 50%, transparent 52%) no-repeat right 6px top 6px / 3px 6px, #fff; font: 11px "DejaVu Sans", sans-serif; color: #000; }
.search { display: flex; align-items: center; width: 181px; height: 20px; margin-left: 5px; padding: 0 4px 0 6px; border: 1px solid #aaa; border-top: 2px solid #808080; border-bottom-color: #ccc; border-radius: 10px; background: #fff; }
.search input { flex: 1; min-width: 0; border: 0; padding: 0; background: none; }

.panes { flex: 1; min-height: 0; display: flex; }
.pane { display: flex; flex-direction: column; border: 1px solid #999; background: #f9f9f9; }
.folders { flex: none; width: 162px; }
.messages { flex: 1; }
.bar-head, thead tr { height: 20px; background: linear-gradient(#f4f6f5, #e4e4e4 50%, #d4d4d4 51%, #cfcfcf); }
.bar-head { margin: 0; padding: 3px 5px; font-size: 11px; }
.folders ul { flex: 1; margin: 0; padding: 0; list-style: none; }
.folders li a { display: flex; align-items: center; gap: 5px; height: 21px; padding: 1px 0 0 6px; border-bottom: 1px solid #e6e6e6; background: #fff; color: #000; }
.folders li a.selected { border-color: #929292; background: #929292; color: #fff; font-weight: 700; }
.bar-foot { display: flex; align-items: center; flex: none; height: 23px; border-top: 1px solid #999; background: linear-gradient(#f0f1f1, #e4e4e4 50%, #d6d6d6 51%, #cdcdcd); color: #444; text-shadow: 1px 1px #fff; }
.gear { gap: 3px; width: 34px; height: 22px; padding-left: 1px; border-right: 1px solid #999; }
.quota { position: relative; width: 102px; height: 16px; margin-left: 18px; border: 1px solid #999; border-radius: 8px; overflow: hidden; background: #fff; text-align: center; line-height: 15px; font-size: 10px; }
.quota-fill { position: absolute; left: 0; top: 0; height: 100%; background: linear-gradient(#9cf79c, #0be80b 40%, #08f008); }
.quota-text { position: relative; text-shadow: none; color: #555; }
.splitter { display: flex; align-items: center; justify-content: flex-start; flex: none; width: 8px; }

table { width: 100%; border-collapse: collapse; table-layout: fixed; margin-bottom: auto; border-bottom: 1px solid #999; }
th { height: 20px; padding: 1px 2px 0; text-align: left; vertical-align: middle; line-height: 16px; }
.c-opt { width: 39px; padding-left: 7px; }
.c-icon { width: 17px; padding: 0 0 0 1px; }
.c-from { width: 184px; padding: 0; }
.sorted { display: flex; align-items: center; justify-content: space-between; height: 20px; padding: 1px 7px 0 2px; background: linear-gradient(#c8c8c8, #a8a8a8 50%, #929292 51%, #8c8c8c); }
.c-date { width: 135px; }
.c-size { width: 68px; text-align: right; }
.c-flag { width: 19px; padding: 0 0 0 3px; }

.list-foot { padding: 1px 7px 0 4px; }
.set { display: flex; gap: 4px; margin: 0 14px 0 7px; }
.bx { fill: none; stroke: #a9a9a9; }
.fl { fill: #a2a2a2; }
.pg { fill: #a9a9a9; }
.list-foot input[type=checkbox] { appearance: none; width: 12px; height: 12px; margin: 0 0 3px 5px; border: 1px solid #a6a6a6; border-radius: 3px; background: #eaeaea; }
.count { margin-left: auto; margin-right: 5px; }
.list-foot > button { margin-left: 6px; }
.list-foot > button + .page { width: 21px; height: 14px; margin: 0 2px 0 8px; padding: 0; border: 1px solid #555; background: #fff; }

.status-bubble { position: absolute; z-index: 2; left: 0; bottom: 0; width: 638px; height: 22px; padding: 3px 3px; border: 1px solid #c8c8c8; border-left: 0; border-top-right-radius: 4px; background: #fff; font: 11px/16px "Open Sans", sans-serif; color: #72767a; }

/* Windows taskbar */
.taskbar { flex: none; display: flex; height: 40px; background: #0d1117; color: #fff; }
.start { width: 48px; }
.win-search { display: flex; align-items: center; width: 344px; padding: 0 15px 0 9px; background: #f2f2f2; }
.win-search input { flex: 1; min-width: 0; padding: 0 0 0 9px; border: 0; background: none; font-size: 14px; }
.win-search input::placeholder { color: #333; opacity: 1; }
.apps { display: flex; gap: 1px; padding-left: 2px; }
.apps button { position: relative; width: 48px; }
.apps .open::after { content: ""; position: absolute; left: 4px; right: 4px; bottom: 0; height: 2px; background: #a9d4f5; }
.apps .current { background: #3b3c3e; }
.apps .current::after { left: 0; right: 0; }
.apps .multi::after { background: linear-gradient(90deg, #a9d4f5 78%, #6f93ae 78%); }
.tray { display: flex; align-items: center; margin-left: auto; padding-right: 12px; border-right: 1px solid #555; margin-right: 3px; gap: 8px; text-align: center; line-height: 17px; }
.tray .people { margin: 0 15px 0 12px; }
.tray .wifi { margin-left: 4px; }
.lang { width: 30px; white-space: nowrap; }
.clock { width: 60px; white-space: nowrap; }
.notify { position: relative; width: 33px; padding-left: 9px; }
.notify b { position: absolute; left: 16px; top: 6px; width: 16px; height: 16px; border: 1px solid #888; border-radius: 50%; background: #333; font-weight: 400; line-height: 14px; }
```
